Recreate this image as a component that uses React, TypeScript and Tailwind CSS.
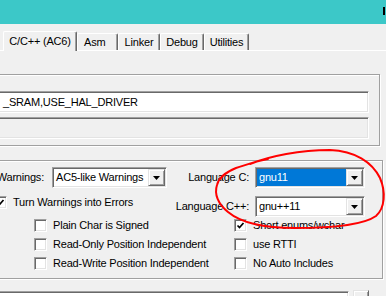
const sunken =
  "border border-t-[#a0a0a0] border-l-[#a0a0a0] border-r-white border-b-white shadow-[inset_1px_1px_0_#696969,inset_-1px_-1px_0_#e3e3e3]";
const raised =
  "border border-t-[#e3e3e3] border-l-[#e3e3e3] border-r-[#696969] border-b-[#696969] shadow-[inset_1px_1px_0_#fff,inset_-1px_-1px_0_#a0a0a0] bg-[#f0f0f0]";
const etched = "border border-[#a0a0a0] shadow-[1px_1px_0_#fff,inset_1px_1px_0_#fff]";

function Arrow() {
  return (
    <svg width="7" height="4" viewBox="0 0 7 4">
      <path d="M0 0h7L3.5 4z" fill="#000" />
    </svg>
  );
}

function Combo({ value, selected, width }: { value: string; selected?: boolean; width: string }) {
  return (
    <div className={`flex h-[21px] p-[1px] bg-white ${sunken} ${width}`}>
      <div
        className={`flex-1 flex items-center pl-[2px] ${selected ? "bg-[#0078d7] text-white" : "text-black"}`}
      >
        {value}
      </div>
      <div className={`w-[17px] flex items-center justify-center ${raised}`}>
        <Arrow />
      </div>
    </div>
  );
}

function Check({ label, checked, className = "" }: { label: string; checked?: boolean; className?: string }) {
  return (
    <div className={`flex items-center h-[13px] ${className}`}>
      <div className={`w-[13px] h-[13px] shrink-0 bg-white flex items-center justify-center ${sunken}`}>
        {checked && (
          <svg width="9" height="9" viewBox="0 0 9 9">
            <path d="M1.5 4.5 L3.5 6.5 L7.5 2" stroke="#000" strokeWidth="1.7" fill="none" />
          </svg>
        )}
      </div>
      <span className="ml-[6px] whitespace-nowrap">{label}</span>
    </div>
  );
}

function Tab({ label, width, selected, extra = "" }: { label: string; width: string; selected?: boolean; extra?: string }) {
  const base =
    "flex items-center justify-center whitespace-nowrap bg-[#f0f0f0] border-t border-l border-t-white border-l-white border-r border-r-[#696969] shadow-[inset_-1px_0_0_#a0a0a0] rounded-tl-[2px] rounded-tr-[2px]";
  return (
    <div
      className={`${base} ${width} ${selected ? "h-[20px] -mb-[1px] relative z-10 pb-[1px]" : "h-[17px]"} ${extra}`}
    >
      {label}
    </div>
  );
}

export default function App() {
  return (
    <div className="relative w-[386px] h-[296px] overflow-hidden bg-[#f0f0f0] text-black text-[11px] tracking-[-0.2px] font-['Liberation_Sans',Arial,sans-serif]">
      <div className="h-[24px] bg-[#3cc8c8] flex justify-end">
        <div className="w-[2px] h-[8px] bg-black mt-[7px] mr-[1px]" />
      </div>

      <div className="h-[27px] border-b border-white flex items-end pl-[3px]">
        <Tab label="C/C++ (AC6)" width="w-[74px]" selected />
        <Tab label="Asm" width="w-[41px]" extra="!justify-start pl-[6px]" />
        <Tab label="Linker" width="w-[42px]" />
        <Tab label="Debug" width="w-[44px]" />
        <Tab label="Utilities" width="w-[45px]" />
      </div>

      <div className={`mt-[23px] -ml-[10px] w-[390px] h-[72px] pt-[16px] pb-[6px] pl-[4px] pr-[10px] ${etched}`}>
        <div className={`h-[22px] bg-white flex items-center pl-[7px] ${sunken}`}>_SRAM,USE_HAL_DRIVER</div>
        <div className={`h-[22px] mt-[4px] bg-[#f0f0f0] ${sunken}`} />
      </div>

      <div className={`mt-[14px] -ml-[10px] w-[393px] h-[119px] pt-[6px] ${etched}`}>
        <div className="flex items-center h-[21px]">
          <div className="w-[53px] text-right whitespace-nowrap">Warnings:</div>
          <div className="ml-[8px]">
            <Combo value="AC5-like Warnings" width="w-[115px]" />
          </div>
          <div className="w-[82px] text-right">Language C:</div>
          <div className="ml-[6px]">
            <Combo value="gnu11" selected width="w-[110px]" />
          </div>
        </div>
        <div className="flex h-[21px] mt-[8px]">
          <div className="w-[176px] pl-[3px]">
            <Check label="Turn Warnings into Errors" checked />
          </div>
          <div className="w-[82px] text-right self-center">Language C++:</div>
          <div className="ml-[6px]">
            <Combo value="gnu++11" width="w-[110px]" />
          </div>
        </div>
        <div className="mt-[2px] pl-[43px] grid grid-cols-[200px_1fr] gap-y-[6px]">
          <Check label="Plain Char is Signed" />
          <Check label="Short enums/wchar" checked />
          <Check label="Read-Only Position Independent" />
          <Check label="use RTTI" />
          <Check label="Read-Write Position Independent" />
          <Check label="No Auto Includes" />
        </div>
      </div>

      <div className="flex items-start mt-[12px]">
        <div className={`-ml-[5px] w-[354px] h-[22px] bg-white ${sunken}`} />
        <div className={`ml-[4px] -mt-[1px] w-[16px] h-[22px] ${raised}`} />
      </div>

      <svg className="absolute inset-0 pointer-events-none" width="386" height="296" viewBox="0 0 386 296">
        <path
          d="M250 164 C270 156 300 150 330 150 C355 151 372 162 380 178 C386 192 385 208 376 216 C362 226 330 228 295 228 C262 228 240 222 228 212 C218 204 214 194 217 185 C219 177 226 172 236 168 C246 165 256 161 268 159"
          stroke="#f00"
          strokeWidth="2"
          fill="none"
          strokeLinecap="round"
        />
      </svg>
    </div>
  );
}
